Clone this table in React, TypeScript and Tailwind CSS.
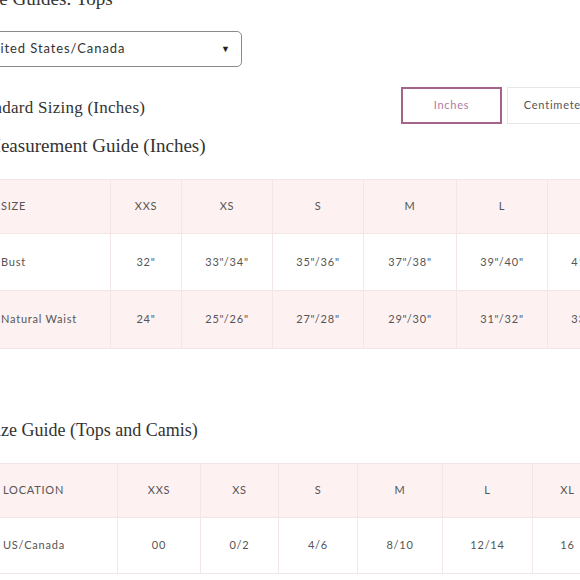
const measure = {
  sizes: ['XXS', 'XS', 'S', 'M', 'L', 'XL'],
  widths: [126, 71, 91, 91, 93, 91, 91],
  rows: [
    { label: 'Bust', values: ['32"', '33"/34"', '35"/36"', '37"/38"', '39"/40"', '41"/42"'] },
    { label: 'Natural Waist', values: ['24"', '25"/26"', '27"/28"', '29"/30"', '31"/32"', '33"/34"'] },
  ],
};

const sizeGuide = {
  sizes: ['XXS', 'XS', 'S', 'M', 'L', 'XL'],
  widths: [131, 83, 78, 79, 85, 90, 70],
  rows: [{ label: 'US/Canada', values: ['00', '0/2', '4/6', '8/10', '12/14', '16'] }],
};

const serif = "font-['Liberation_Serif',serif] text-[#333]";
const sans = "font-['Lato','Noto_Sans',sans-serif]";

function SizeTable({
  head,
  sizes,
  widths,
  rows,
  rowHeights,
}: {
  head: string;
  sizes: string[];
  widths: number[];
  rows: { label: string; values: string[] }[];
  rowHeights: string[];
}) {
  return (
    <table className={`table-fixed border-collapse text-[11px] tracking-[0.07em] text-[#555] ${sans}`}>
      <colgroup>
        {widths.map((w, i) => (
          <col key={i} style={{ width: w }} />
        ))}
      </colgroup>
      <tbody>
        <tr className="bg-[#fdf1f1]">
          <td className={`${rowHeights[0]} border border-[#f3e6e6] pl-[16px] text-left`}>{head}</td>
          {sizes.map((s) => (
            <td key={s} className="border border-[#f3e6e6] text-center">
              {s}
            </td>
          ))}
        </tr>
        {rows.map((r, i) => (
          <tr key={r.label} className={i % 2 === 1 ? 'bg-[#fdf1f1]' : 'bg-white'}>
            <td className={`${rowHeights[i + 1]} border border-[#f3e6e6] pl-[16px] text-left`}>{r.label}</td>
            {r.values.map((v, j) => (
              <td key={j} className="border border-[#f3e6e6] text-center">
                {v}
              </td>
            ))}
          </tr>
        ))}
      </tbody>
    </table>
  );
}

export default function App() {
  return (
    <div className="w-[580px] h-[580px] overflow-hidden bg-white">
      <div className="flex flex-col w-[700px]">
        {/* page title, cut off at the top */}
        <h1 className={`${serif} text-[19px] leading-[22px] -mt-[12px] -ml-[25px] whitespace-nowrap`}>
          Size Guides: Tops
        </h1>

        <div className="mt-[21px] -ml-[31px] w-[273px] h-[36px] border border-[#8a8a8a] rounded-[5px] flex items-center justify-between pl-[12px] pr-[11px]">
          <span className={`${sans} text-[13px] tracking-[0.07em] text-[#333]`}>United States/Canada</span>
          <span className="text-[9px] text-[#222]">▼</span>
        </div>

        <div className="mt-[20px] flex items-center h-[37px]">
          <div className={`${serif} text-[17px] tracking-[0.015em] -ml-[29px] w-[430px] pt-[5px] whitespace-nowrap`}>
            Standard Sizing (Inches)
          </div>
          <div className="flex gap-[5px]">
            <button className={`${sans} w-[101px] h-[37px] border-2 border-[#a4638a] text-[11px] tracking-[0.07em] text-[#b27aa0]`}>
              Inches
            </button>
            <button className={`${sans} w-[101px] h-[37px] border border-[#e6e6e6] text-[11px] tracking-[0.07em] text-[#555]`}>
              Centimeters
            </button>
          </div>
        </div>

        <h2 className={`${serif} text-[19px] leading-[22px] mt-[11px] -ml-[16px] whitespace-nowrap`}>
          Measurement Guide (Inches)
        </h2>

        <div className="mt-[22px] -ml-[16px]">
          <SizeTable
            head="SIZE"
            sizes={measure.sizes}
            widths={measure.widths}
            rows={measure.rows}
            rowHeights={['h-[54px]', 'h-[57px]', 'h-[58px]']}
          />
        </div>

        <h2 className={`${serif} text-[18px] leading-[22px] mt-[70px] -ml-[14px] whitespace-nowrap`}>
          Size Guide (Tops and Camis)
        </h2>

        <div className="mt-[22px] -ml-[14px]">
          <SizeTable
            head="LOCATION"
            sizes={sizeGuide.sizes}
            widths={sizeGuide.widths}
            rows={sizeGuide.rows}
            rowHeights={['h-[54px]', 'h-[56px]']}
          />
        </div>
      </div>
    </div>
  );
}
